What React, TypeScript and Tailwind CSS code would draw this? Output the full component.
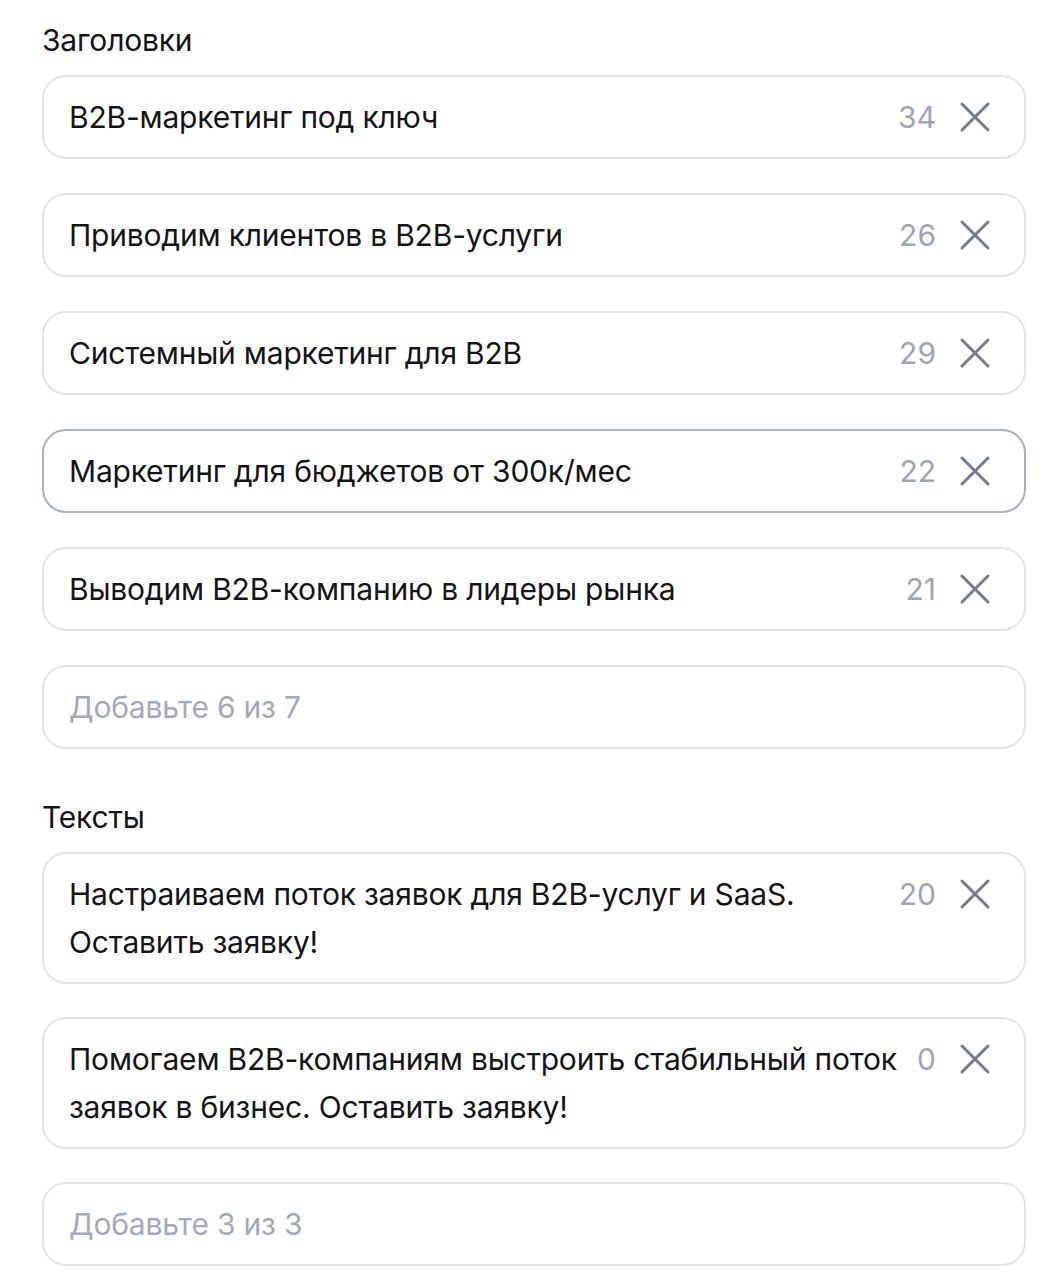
const headlines = [
  { text: "B2B-маркетинг под ключ", count: 34 },
  { text: "Приводим клиентов в B2B-услуги", count: 26 },
  { text: "Системный маркетинг для B2B", count: 29 },
  { text: "Маркетинг для бюджетов от 300к/мес", count: 22, focused: true },
  { text: "Выводим B2B-компанию в лидеры рынка", count: 21 },
];

const texts = [
  { text: "Настраиваем поток заявок для B2B-услуг и SaaS. Оставить заявку!", count: 20 },
  { text: "Помогаем B2B-компаниям выстроить стабильный поток заявок в бизнес. Оставить заявку!", count: 0 },
];

function CloseIcon() {
  return (
    <svg width="32" height="32" viewBox="0 0 32 32" fill="none">
      <path d="M3 3L29 29M29 3L3 29" stroke="#737b8c" strokeWidth="3" strokeLinecap="round" />
    </svg>
  );
}

function Field({ text, count, focused }: { text: string; count: number; focused?: boolean }) {
  return (
    <div
      className={`flex items-start rounded-[24px] border-2 bg-white py-4 pl-[25px] pr-[33px] ${
        focused ? "border-[#a9b0bf]" : "border-[#e1e3e8]"
      }`}
    >
      <div className="flex-1 text-[30px] leading-[48px] tracking-[-0.2px] text-[#141416]">{text}</div>
      <div className="ml-3 flex h-[48px] items-center text-[30px] text-[#9ea5b3]">{count}</div>
      <div className="ml-[23px] flex h-[48px] items-center">
        <CloseIcon />
      </div>
    </div>
  );
}

function Placeholder({ text }: { text: string }) {
  return (
    <div className="rounded-[24px] border-2 border-[#e1e3e8] bg-white py-4 pl-[25px] pr-[33px]">
      <div className="text-[30px] leading-[48px] tracking-[-0.2px] text-[#a3a9b7]">{text}</div>
    </div>
  );
}

export default function App() {
  return (
    <div className="min-h-[1280px] w-[1054px] bg-white pl-[42px] pr-[28px] pt-5 font-['Inter',sans-serif] antialiased">
      <div className="text-[30px] leading-[40px] tracking-[-0.2px] text-[#141416]">Заголовки</div>
      <div className="mt-[15px] flex flex-col gap-[34px]">
        {headlines.map((h) => (
          <Field key={h.text} {...h} />
        ))}
        <Placeholder text="Добавьте 6 из 7" />
      </div>

      <div className="mt-[48px] text-[30px] leading-[40px] tracking-[-0.2px] text-[#141416]">Тексты</div>
      <div className="mt-[15px] flex flex-col gap-[33px]">
        {texts.map((t) => (
          <Field key={t.text} {...t} />
        ))}
        <Placeholder text="Добавьте 3 из 3" />
      </div>
    </div>
  );
}
